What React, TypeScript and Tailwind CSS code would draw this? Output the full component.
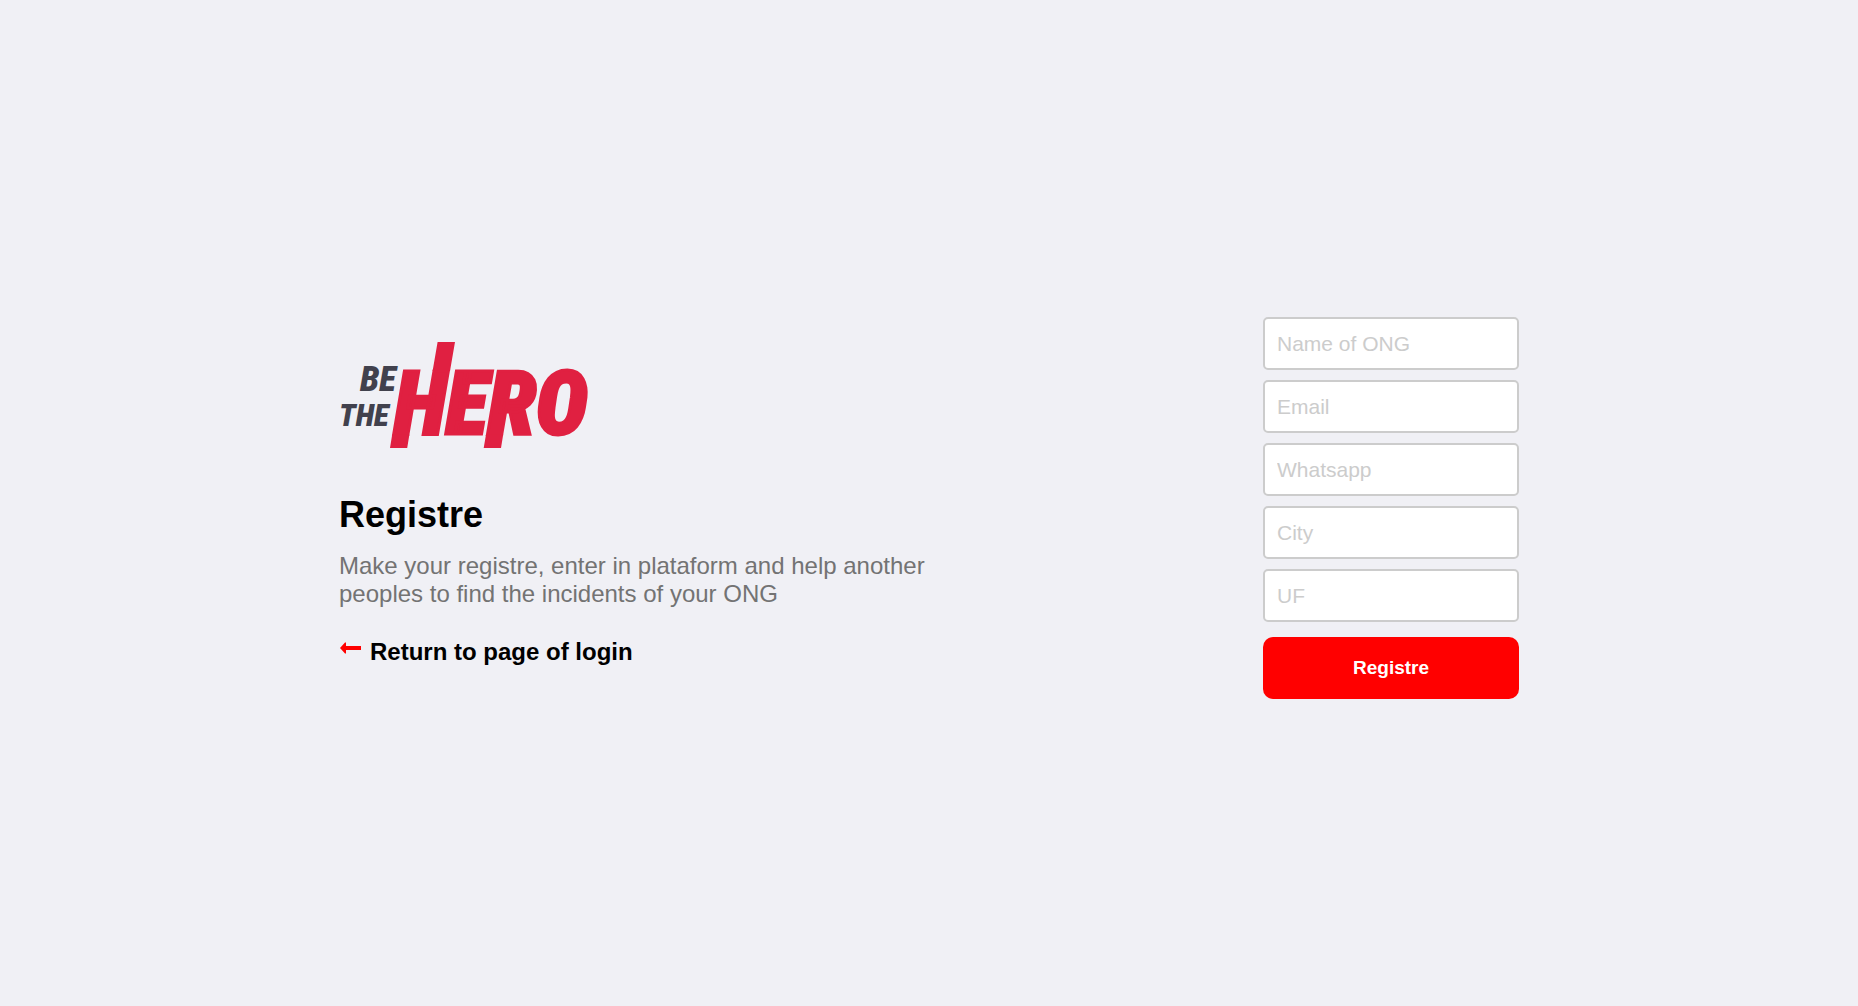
const fields = [
  { id: 'name', label: 'Name of ONG', type: 'text' },
  { id: 'email', label: 'Email', type: 'email' },
  { id: 'whatsapp', label: 'Whatsapp', type: 'tel' },
  { id: 'city', label: 'City', type: 'text' },
  { id: 'uf', label: 'UF', type: 'text' },
];

function Logo() {
  return (
    <svg
      width="250"
      height="106"
      viewBox="0 0 250 106"
      role="img"
      aria-label="Be The Hero"
      className="overflow-visible font-['Roboto_Condensed','Roboto',sans-serif] font-black italic"
    >
      <g fill="#41414d">
        <text x="21" y="49" fontSize="35">BE</text>
        <text x="0" y="84" fontSize="31">THE</text>
      </g>
      <g fill="#e02041">
        <text x="55" y="92" fontSize="88" stroke="#e02041" strokeWidth="3">HERO</text>
        {/* bars that run above and below the word */}
        <path d="M98.6 0H116L111 29H93.6Z M53.2 92.5H70.4L68.2 106H51Z M147 92.5H164.2L162 106H144.7Z" />
      </g>
    </svg>
  );
}

export default function App() {
  return (
    <main className="flex min-h-screen items-center justify-center bg-[#f0f0f5] px-6 font-['Liberation_Sans',Arial,sans-serif]">
      <div className="flex w-full max-w-[1180px] flex-wrap items-center justify-between gap-8">
        <section className="mt-0.5 max-w-[600px]">
          <Logo />
          <h1 className="mt-[46px] text-4xl leading-[42px] font-bold text-black">Registre</h1>
          <p className="mt-4 text-2xl leading-7 text-[#737373]">
            Make your registre, enter in plataform and help another peoples to find the incidents of your ONG
          </p>
          <a href="#login" className="mt-[30px] flex items-center gap-2 text-2xl leading-7 font-bold text-black">
            <svg width="23" height="20" viewBox="0 0 23 20" fill="#ff0000" aria-hidden="true" className="mb-2">
              <path d="M1 10L6 4.5H7V8H22V12H7V15.5H6Z" />
            </svg>
            Return to page of login
          </a>
        </section>

        <form className="mt-2.5 flex w-64 flex-col gap-2.5" onSubmit={(e) => e.preventDefault()}>
          {fields.map((f) => (
            <input
              key={f.id}
              id={f.id}
              name={f.id}
              type={f.type}
              aria-label={f.label}
              placeholder={f.label}
              className="h-[53px] w-full rounded-[5px] border-2 border-[#cccccc] bg-white px-3 text-[21px] text-black placeholder:text-[#cccccc]"
            />
          ))}
          <button type="submit" className="mt-[5px] h-[62px] rounded-[10px] bg-[#ff0000] text-[19px] font-bold text-white">
            Registre
          </button>
        </form>
      </div>
    </main>
  );
}
